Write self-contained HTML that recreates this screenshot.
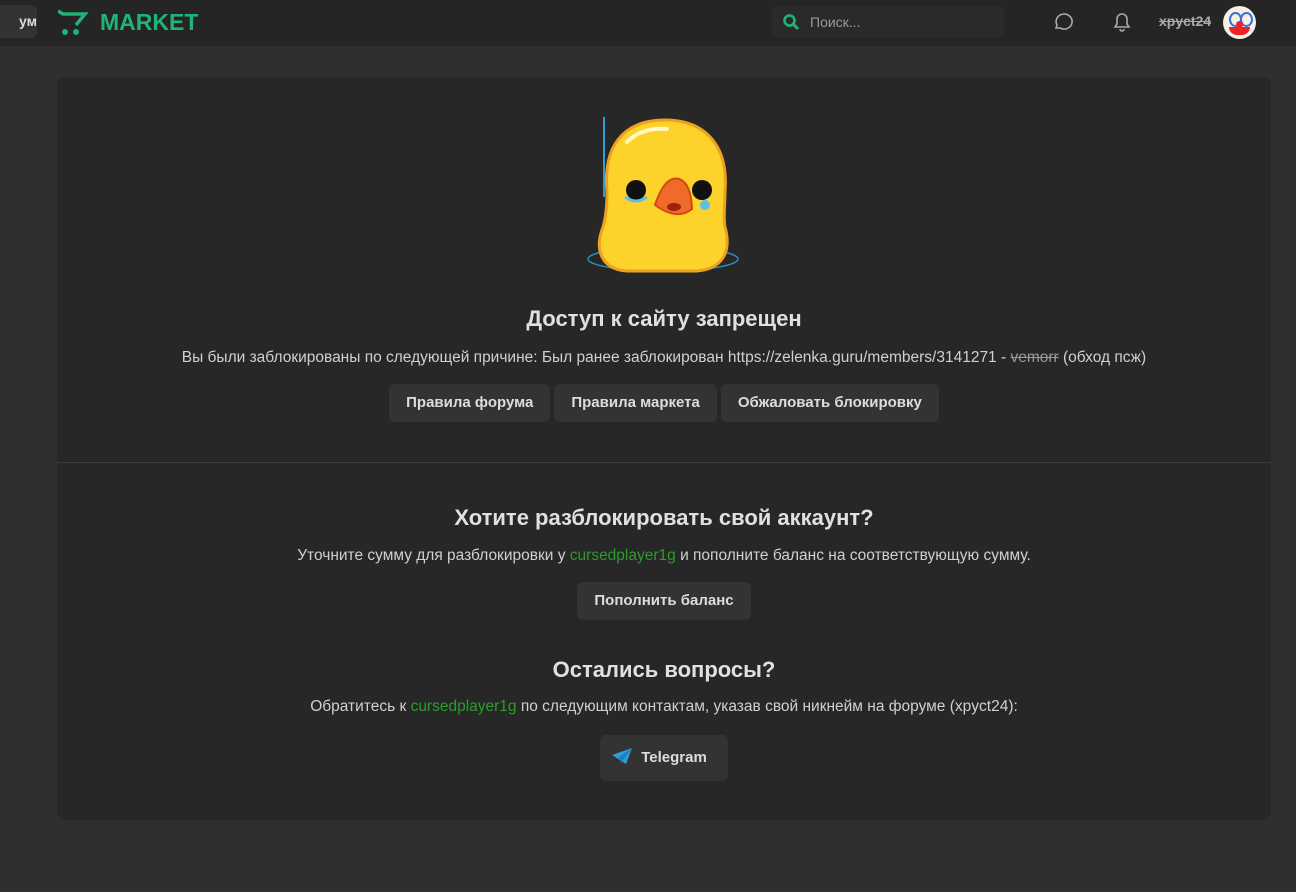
<!DOCTYPE html>
<html><head><meta charset="utf-8"><style>
body{margin:0;width:1296px;height:892px;background:#2f2f2f;font-family:"Liberation Sans",sans-serif;color:#d6d6d6;overflow:hidden;position:relative}
.hdr{position:absolute;left:0;top:0;width:1296px;height:46px;background:#252525}
.btnf{position:absolute;left:-10px;top:5px;width:47px;height:33px;background:#333;border-radius:6px;color:#ddd;font-weight:bold;font-size:14px;line-height:33px;text-align:right;padding-right:0}
.logo{position:absolute;left:58px;top:8px}
.search{position:absolute;left:772px;top:6px;width:232px;height:32px;background:#2a2a2a;border-radius:6px}
.search span{position:absolute;left:38px;top:8px;font-size:14px;color:#999}
.card{position:absolute;left:57px;top:77px;width:1214px;height:743px;background:#272727;border-radius:8px}
.c{position:absolute;left:0;width:100%;text-align:center}
h1{font-size:22px;font-weight:bold;margin:0;color:#e0e0e0}
.t{font-size:15.5px;color:#d0d0d0}
.b{display:inline-block;background:#333;border-radius:6px;height:38px;line-height:38px;padding:0 17px;font-size:15px;font-weight:bold;color:#ddd;margin:0 2px}
.g{color:#2a9d2a}
</style></head><body>
<div class="hdr">
<div class="btnf">ум</div>
<svg class="logo" width="160" height="30" viewBox="0 0 160 30"><path d="M0 3 L5 6 L27 6 L18 17" stroke="#1fb477" stroke-width="3.5" fill="none"/><circle cx="7" cy="24" r="3" fill="#1fb477"/><circle cx="18" cy="24" r="3" fill="#1fb477"/><text x="42" y="22" font-family="Liberation Sans" font-weight="bold" font-size="23" fill="#1fb477">MARKET</text></svg>
<div class="search"><svg style="position:absolute;left:10px;top:7px" width="18" height="18" viewBox="0 0 18 18"><circle cx="7.5" cy="7.5" r="5" stroke="#1fb477" stroke-width="2.6" fill="none"/><path d="M11 11 L16 16" stroke="#1fb477" stroke-width="3"/></svg><span>Поиск...</span></div>
<svg style="position:absolute;left:1052px;top:11px" width="22" height="22" viewBox="0 0 22 22"><path d="M4 17 L5 14 A8 7.5 0 1 1 8 17 Z" stroke="#aaa" stroke-width="1.6" fill="none"/></svg>
<svg style="position:absolute;left:1110px;top:10px" width="24" height="24" viewBox="0 0 24 24"><path d="M5 17 L7 14 L7 9 A5 5 0 0 1 17 9 L17 14 L19 17 Z M10 19 A2 2 0 0 0 14 19" stroke="#aaa" stroke-width="1.6" fill="none"/></svg>
<div style="position:absolute;left:1159px;top:13px;font-size:14px;font-weight:bold;color:#aaa;text-decoration:line-through">xpyct24</div>
<div style="position:absolute;left:1223px;top:6px;width:33px;height:33px;border-radius:50%;background:#f5efe6;overflow:hidden"><div style="position:absolute;left:6px;top:6px;width:9px;height:11px;border:2px solid #3b6fd8;border-radius:50%"></div><div style="position:absolute;left:17px;top:6px;width:9px;height:11px;border:2px solid #3b6fd8;border-radius:50%"></div><div style="position:absolute;left:13px;top:15px;width:7px;height:7px;background:#e22;border-radius:50%"></div><div style="position:absolute;left:6px;top:21px;width:21px;height:8px;background:#e22;border-radius:0 0 12px 12px"></div></div>
</div>
<div class="card">
<svg style="position:absolute;left:530px;top:40px" width="170" height="160" viewBox="0 0 170 160">
<ellipse cx="76" cy="142" rx="75" ry="12" stroke="#2a8fb8" stroke-width="1.5" fill="none"/>
<path d="M17 0 L17 80" stroke="#2a9fd0" stroke-width="2"/>
<path d="M20 75 C15 20 45 3 78 3 C115 3 142 25 138 75 C138 90 136 100 138 110 C145 135 135 152 110 154 L40 154 C12 152 8 130 16 110 C19 100 20 90 20 75 Z" fill="#fdd22a" stroke="#f0a020" stroke-width="3"/>
<path d="M40 25 Q55 10 80 12" stroke="#fff8c0" stroke-width="4" fill="none" stroke-linecap="round"/>
<circle cx="49" cy="73" r="10" fill="#111"/><circle cx="115" cy="73" r="10" fill="#111"/>
<path d="M38 80 Q49 88 60 80" stroke="#5bc0e8" stroke-width="3" fill="none"/>
<circle cx="118" cy="88" r="5" fill="#5bc0e8"/>
<path d="M68 88 Q78 58 92 62 Q104 66 105 92 Q90 104 68 88Z" fill="#f06a2a" stroke="#d04a10" stroke-width="2"/>
<ellipse cx="87" cy="90" rx="7" ry="4" fill="#a02010"/>
</svg>
<div class="c" style="top:229px"><h1>Доступ к сайту запрещен</h1></div>
<div class="c t" style="top:272px">Вы были заблокированы по следующей причине: Был ранее заблокирован https://zelenka.guru/members/3141271 - <s style="color:#999">vemorr</s> (обход псж)</div>
<div class="c" style="top:307px"><span class="b">Правила форума</span><span class="b">Правила маркета</span><span class="b">Обжаловать блокировку</span></div>
<div style="position:absolute;left:0;top:385px;width:100%;height:1px;background:#3a3a3a"></div>
<div class="c" style="top:428px"><h1>Хотите разблокировать свой аккаунт?</h1></div>
<div class="c t" style="top:470px">Уточните сумму для разблокировки у <span class="g">cursedplayer1g</span> и пополните баланс на соответствующую сумму.</div>
<div class="c" style="top:505px"><span class="b">Пополнить баланс</span></div>
<div class="c" style="top:580px"><h1>Остались вопросы?</h1></div>
<div class="c t" style="top:621px">Обратитесь к <span class="g">cursedplayer1g</span> по следующим контактам, указав свой никнейм на форуме (xpyct24):</div>
<div class="c" style="top:658px"><span class="b" style="height:46px;line-height:46px;padding:0 21px 0 12px"><svg width="20" height="16" viewBox="0 0 20 16" style="vertical-align:-2px;margin-right:9px"><path d="M0 7 L20 0 L14 16 Z" fill="#2a9fd9"/><path d="M7 9 L20 0 L9 15 Z" fill="#1d7fb5"/></svg>Telegram</span></div>
</div>
</body></html>
